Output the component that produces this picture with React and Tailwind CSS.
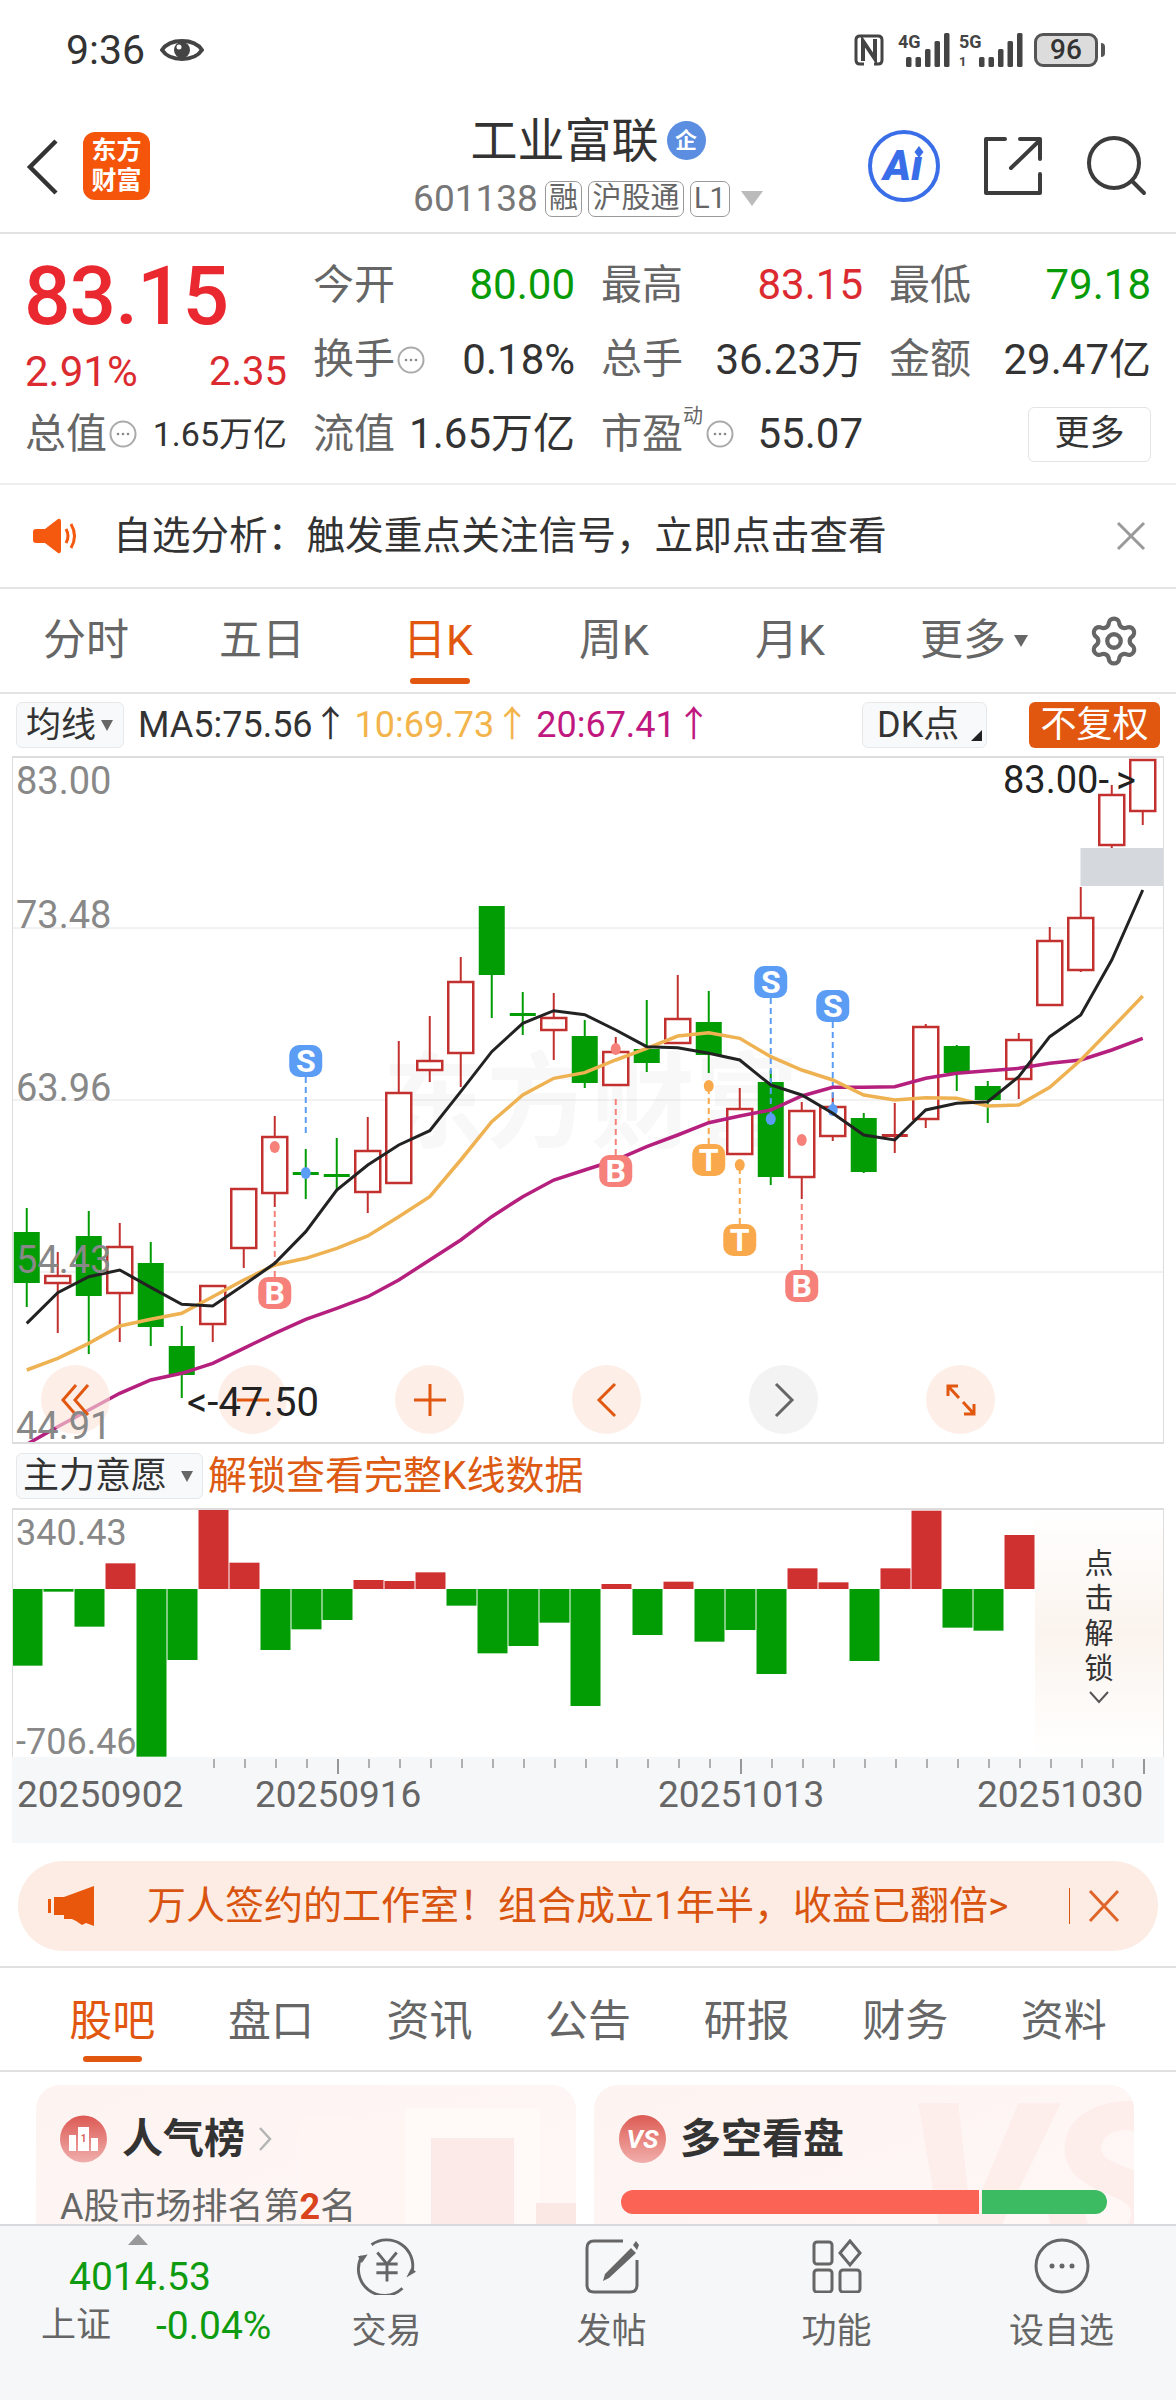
import { Settings } from "lucide-react"

const candles = [
  ["g", 1232, 1283, 1208, 1307], ["r", 1276, 1283, 1252, 1333], ["g", 1236, 1296, 1211, 1354],
  ["r", 1247, 1293, 1223, 1342], ["g", 1263, 1327, 1242, 1346], ["g", 1346, 1375, 1326, 1398],
  ["r", 1286, 1324, 1286, 1342], ["r", 1189, 1248, 1189, 1268], ["r", 1137, 1193, 1116, 1207],
  ["g", 1172, 1174, 1149, 1199], ["g", 1174, 1176, 1138, 1190], ["r", 1151, 1192, 1117, 1213],
  ["r", 1093, 1183, 1041, 1183], ["r", 1061, 1070, 1016, 1082], ["r", 982, 1053, 957, 1087],
  ["g", 906, 975, 906, 1018], ["g", 1013, 1016, 992, 1035], ["r", 1018, 1030, 993, 1060],
  ["g", 1036, 1083, 1020, 1088], ["r", 1052, 1085, 1037, 1085], ["g", 1049, 1063, 1000, 1072],
  ["r", 1019, 1043, 975, 1043], ["g", 1022, 1055, 991, 1073], ["r", 1109, 1154, 1088, 1154],
  ["g", 1082, 1177, 1070, 1185], ["r", 1111, 1177, 1102, 1199], ["r", 1107, 1136, 1093, 1141],
  ["g", 1118, 1172, 1113, 1173], ["f", 1134, 1137, 1103, 1153], ["r", 1027, 1119, 1024, 1128],
  ["g", 1046, 1073, 1045, 1091], ["g", 1086, 1100, 1081, 1123], ["r", 1040, 1079, 1033, 1099],
  ["r", 941, 1005, 927, 1005], ["r", 918, 970, 887, 972], ["r", 795, 845, 785, 848],
  ["r", 760, 811, 760, 825],
]

const ma5 = [970, 878, 830, 810, 862, 913, 918, 855, 790, 695, 570, 495, 435, 392, 275, 155, 70, 32, 44, 90, 140, 143, 160, 180, 255, 285, 340, 405, 420, 330, 310, 305, 230, 110, 45, -120, -330]
const ma10 = [1110, 1075, 1030, 978, 958, 940, 890, 840, 795, 775, 745, 708, 650, 590, 480, 365, 285, 235, 218, 180, 145, 108, 98, 115, 170, 210, 240, 285, 300, 293, 295, 318, 315, 262, 180, 85, -12]
const ma20 = [1333, 1280, 1230, 1180, 1140, 1120, 1090, 1045, 1000, 958, 925, 890, 840, 780, 720, 650, 590, 540, 510, 480, 440, 405, 368, 348, 330, 288, 262, 262, 260, 235, 220, 212, 205, 190, 180, 150, 115]

const signals = [
  { l: "S", i: 9, top: 1045, dashTo: 1136, dot: 1173, c: "#5b9df5" },
  { l: "S", i: 24, top: 966, dashTo: 1119, dot: 1119, c: "#5b9df5" },
  { l: "S", i: 26, top: 990, dashTo: 1110, dot: 1110, c: "#5b9df5" },
  { l: "B", i: 8, top: 1277, dashTo: 1207, dot: 1147, c: "#f5817a" },
  { l: "B", i: 19, top: 1155, dashTo: 1097, dot: 1049, c: "#f5817a" },
  { l: "B", i: 25, top: 1270, dashTo: 1202, dot: 1140, c: "#f5817a" },
  { l: "T", i: 22, top: 1144, dashTo: 1092, dot: 1086, c: "#f9a94b" },
  { l: "T", i: 23, top: 1224, dashTo: 1170, dot: 1165, c: "#f9a94b" },
]

const bars = [677, 455, 560, 370, 950, 660, 205, 368, 630, 568, 540, 420, 423, 397, 497, 640, 618, 548, 798, 432, 585, 425, 605, 570, 702, 385, 427, 663, 385, 212, 563, 572, 285]

const xAt = (i) => 26.25 + i * 31
const linePoints = (arr) => arr.map((v, i) => `${xAt(i)},${1000 + v / 3}`).join(" ")

const CandleChart = () => (
  <svg viewBox="13 758 1149 684" className="absolute inset-0 w-full h-full">
    <text x="590" y="1140" textAnchor="middle" fontSize="104" fontWeight="700" fill="#f8f8f8">东方财富</text>
    {[928, 1100, 1272].map(y => (
      <line key={y} x1="12" x2="1163" y1={y} y2={y} stroke="#c8c8c8" strokeWidth="1" strokeDasharray="1 1" />
    ))}
    <rect x="1080" y="848" width="83" height="38" fill="#d5d8dc" />
    {candles.map(([k, top, bot, wt, wb], i) => {
      const x = xAt(i)
      const color = k === "g" ? "#029c05" : "#c2302f"
      return (
        <g key={i}>
          <line x1={x} x2={x} y1={wt} y2={wb} stroke={color} strokeWidth="2" />
          {k === "r"
            ? <rect x={x - 12.5} y={top} width="25" height={bot - top} fill="#fff" stroke={color} strokeWidth="2.5" />
            : <rect x={x - 13} y={top} width="26" height={Math.max(bot - top, 3)} fill={color} />}
        </g>
      )
    })}
    {signals.map(s => {
      const x = xAt(s.i)
      const isBlue = s.l === "S"
      return (
        <g key={s.l + s.i}>
          <line x1={x} x2={x} y1={isBlue ? s.top + 32 : s.top} y2={s.dashTo} stroke={s.c} strokeWidth="2" strokeDasharray="6 4" />
          <ellipse cx={x} cy={s.dot} rx="5" ry="6" fill={s.c} />
        </g>
      )
    })}
    <polyline points={linePoints(ma20)} fill="none" stroke="#b51f7d" strokeWidth="3.5" />
    <polyline points={linePoints(ma10)} fill="none" stroke="#efb253" strokeWidth="3.5" />
    <polyline points={linePoints(ma5)} fill="none" stroke="#222" strokeWidth="3" />
    {signals.map(s => {
      const x = xAt(s.i)
      return (
        <g key={"b" + s.l + s.i}>
          <rect x={x - 16.5} y={s.top} width="33" height="32" rx="10" fill={s.c} />
          <text x={x} y={s.top + 27} textAnchor="middle" fontSize="32" fontWeight="700" fill="#fff">{s.l}</text>
        </g>
      )
    })}
  </svg>
)

const FundBars = () => (
  <svg viewBox="13 1510 1149 247" className="absolute inset-0 w-full h-full">
    {bars.map((z, i) => {
      const y = 1440 + z / 3
      const green = y > 1589
      return (
        <rect
          key={i}
          x={12 + i * 31}
          y={green ? 1589 : y}
          width="30"
          height={Math.abs(y - 1589)}
          fill={green ? "#029c05" : "#cf3030"}
        />
      )
    })}
  </svg>
)

const Ticks = () => (
  <svg viewBox="12 1757 1152 20" className="block w-full h-[20px]">
    {Array.from({ length: 31 }).map((_, k) => {
      const big = k === 4 || k === 17 || k === 30
      const x = 214 + k * 31
      return <line key={k} x1={x} x2={x} y1="1759" y2={big ? 1774 : 1768} stroke={big ? "#777" : "#999"} strokeWidth="1.5" />
    })}
  </svg>
)

const Dots = () => (
  <svg width="28" height="28" viewBox="0 0 28 28" className="shrink-0">
    <circle cx="14" cy="14" r="12.5" fill="none" stroke="#aaa" strokeWidth="2" />
    <circle cx="9" cy="14" r="1.3" fill="#888" />
    <circle cx="14" cy="14" r="1.3" fill="#888" />
    <circle cx="19" cy="14" r="1.3" fill="#888" />
  </svg>
)

const Signal = ({ label, extra }) => (
  <svg width={extra ? 62 : 52} height="34" viewBox={`0 0 ${extra ? 62 : 52} 34`} className="overflow-visible">
    <text x="0" y="15" fontSize="18" fontWeight="700" fill="#444">{label}</text>
    {extra && <text x="0" y="33" fontSize="13" fontWeight="700" fill="#444">{extra}</text>}
    {Array.from({ length: 5 }).map((_, i) => {
      const x = (extra ? 20 : 8) + i * 9.5
      const h = i < 2 ? 10 : 10 + (i - 1) * 8
      return <rect key={i} x={x} y={34 - h} width="5.5" height={h} rx="1.5" fill="#444" />
    })}
  </svg>
)

const StatusBar = () => (
  <div className="h-[100px] flex items-center pl-[66px] pr-[71px]">
    <span className="text-[41px] leading-none text-[#333]">9:36</span>
    <svg width="44" height="32" viewBox="0 0 44 32" className="ml-[15px]">
      <path d="M2 16 C10 4 34 4 42 16 C34 28 10 28 2 16 Z" fill="none" stroke="#444" strokeWidth="4" />
      <circle cx="22" cy="16" r="8" fill="#444" />
      <circle cx="19" cy="13" r="2.5" fill="#fff" />
    </svg>
    <div className="ml-auto flex items-center">
      <svg width="30" height="32" viewBox="0 0 30 32">
        <path d="M6 2 H24 Q28 2 28 6 V26 Q28 30 24 30 H20 M10 30 H6 Q2 30 2 26 V6 Q2 2 6 2" fill="none" stroke="#444" strokeWidth="3" />
        <path d="M9 27 V7 L21 25 V5" fill="none" stroke="#444" strokeWidth="4" />
      </svg>
      <div className="ml-[14px]"><Signal label="4G" /></div>
      <div className="ml-[9px]"><Signal label="5G" extra="1" /></div>
      <div className="ml-[13px] w-[64px] h-[34px] rounded-[9px] border-[3px] border-[#555] bg-[#dcdcdc] flex items-center justify-center text-[28px] font-medium text-[#333]">96</div>
      <div className="ml-[3px] w-[4px] h-[14px] rounded-r bg-[#555]"></div>
    </div>
  </div>
)

const Chip = ({ children, w }) => (
  <span className={`${w} h-[36px] rounded-[7px] border border-[#999] flex items-center justify-center text-[29px] leading-none text-[#666]`}>
    {children}
  </span>
)

const Header = () => (
  <div className="h-[134px] border-b-2 border-[#e2e2e2] flex">
    <div className="w-[388px] flex items-start">
      <svg width="34" height="58" viewBox="0 0 34 58" className="ml-[26px] mt-[38px]">
        <polyline points="30,3 4,29 30,55" fill="none" stroke="#333" strokeWidth="4.5" />
      </svg>
      <div className="ml-[23px] mt-[32px] w-[67px] h-[68px] rounded-[12px] bg-[#f4550b] text-white font-bold text-[25px] leading-[30px] flex flex-col items-center justify-center">
        <span>东方</span>
        <span>财富</span>
      </div>
    </div>
    <div className="w-[400px] flex flex-col items-center">
      <div className="mt-[14px] h-[52px] flex items-center text-[#333]">
        <span className="text-[47px] leading-none">工业富联</span>
        <span className="ml-[8px] w-[39px] h-[39px] rounded-full bg-[#5b8de0] text-white text-[22px] font-bold flex items-center justify-center">企</span>
      </div>
      <div className="mt-[14px] flex items-center text-[#777]">
        <span className="text-[37px] leading-none">601138</span>
        <div className="ml-[7px] flex items-center gap-[6px]">
          <Chip w="w-[37px]">融</Chip>
          <Chip w="w-[96px]">沪股通</Chip>
          <Chip w="w-[40px]">L1</Chip>
        </div>
        <span className="ml-[11px] w-0 h-0 border-x-[11px] border-x-transparent border-t-[15px] border-t-[#bbb]"></span>
      </div>
    </div>
    <div className="flex-1 flex items-start">
      <svg width="74" height="74" viewBox="0 0 74 74" className="ml-[79px] mt-[29px]">
        <circle cx="37" cy="37" r="34" fill="none" stroke="#3a6ee8" strokeWidth="4" />
        <text x="36" y="51" textAnchor="middle" fontSize="42" fontWeight="900" fontStyle="italic" fill="#3a6ee8">{"A\u0131"}</text>
        <path d="M52 17 L56.5 23 L52 29 L47.5 23 Z" fill="#3a6ee8" />
      </svg>
      <svg width="60" height="60" viewBox="0 0 60 60" className="ml-[42px] mt-[36px]">
        <path d="M22 3 H3 V57 H57 V38" fill="none" stroke="#3c3c3c" strokeWidth="4" strokeLinecap="round" strokeLinejoin="round" />
        <path d="M28 32 L57 4 M37 3 H57 V23" fill="none" stroke="#3c3c3c" strokeWidth="4" strokeLinecap="round" strokeLinejoin="round" />
      </svg>
      <svg width="62" height="62" viewBox="0 0 62 62" className="ml-[43px] mt-[35px]">
        <circle cx="28" cy="28" r="25" fill="none" stroke="#3c3c3c" strokeWidth="4" />
        <line x1="46" y1="46" x2="58" y2="58" stroke="#3c3c3c" strokeWidth="4" strokeLinecap="round" />
      </svg>
    </div>
  </div>
)

const Stat = ({ label, value, color = "text-[#333]", dots }) => (
  <div className="flex items-center justify-between text-[41px] leading-none">
    <span className="flex items-center text-[#666] gap-[2px]">
      {label}
      {dots && <Dots />}
    </span>
    <span className={`${color} text-[42px]`}>{value}</span>
  </div>
)

const Quote = () => (
  <div className="h-[251px] border-b-2 border-[#eeeeee] flex pl-[25px]">
    <div className="w-[262px] pt-[20px] flex flex-col text-[#dc2b30]">
      <div className="h-[84px] -ml-[1px] flex items-center text-[82px] leading-none font-medium text-[#ea2830] tracking-[-1px]">83.15</div>
      <div className="h-[68px] flex items-center justify-between leading-none">
        <span className="text-[42px]">2.91%</span>
        <span className="text-[40px]">2.35</span>
      </div>
      <div className="h-[56px] flex items-center justify-between leading-none">
        <span className="flex items-center text-[41px] text-[#666] gap-[2px]">总值<Dots /></span>
        <span className="text-[34px] text-[#333]">1.65万亿</span>
      </div>
    </div>
    <div className="w-[838px] ml-[26px] pt-[14px] grid grid-cols-3 gap-x-[26px] auto-rows-[74.5px] items-center">
      <Stat label="今开" value="80.00" color="text-[#079b07]" />
      <Stat label="最高" value="83.15" color="text-[#dc2b30]" />
      <Stat label="最低" value="79.18" color="text-[#079b07]" />
      <Stat label="换手" value="0.18%" dots />
      <Stat label="总手" value="36.23万" />
      <Stat label="金额" value="29.47亿" />
      <Stat label="流值" value="1.65万亿" />
      <div className="flex items-center justify-between text-[41px] leading-none">
        <span className="flex items-center text-[#666]">
          市盈
          <span className="text-[20px] self-start -mt-[8px]">动</span>
          <span className="ml-[3px]"><Dots /></span>
        </span>
        <span className="text-[#333] text-[42px]">55.07</span>
      </div>
      <div className="flex justify-end">
        <span className="w-[123px] h-[55px] rounded-[6px] border border-[#e4e4e4] text-[#333] text-[35px] flex items-center justify-center">更多</span>
      </div>
    </div>
  </div>
)

const Notice = () => (
  <div className="h-[104px] border-b-2 border-[#e4e4e4] flex items-center pl-[33px] pr-[30px]">
    <svg width="46" height="40" viewBox="0 0 46 40">
      <path d="M3 13 H12 L25 3 Q28 2 28 6 V34 Q28 38 25 37 L12 27 H3 Q0 27 0 24 V16 Q0 13 3 13 Z" fill="#f4590f" />
      <path d="M33 13 Q37 20 33 27" fill="none" stroke="#f4590f" strokeWidth="3" />
      <path d="M38 8 Q45 20 38 32" fill="none" stroke="#f4590f" strokeWidth="3" />
    </svg>
    <span className="ml-[34px] text-[38.7px] leading-none text-[#333] whitespace-nowrap">{"自选分析\uFF1A触发重点关注信号\uFF0C立即点击查看"}</span>
    <svg width="30" height="30" viewBox="0 0 30 30" className="ml-auto">
      <path d="M2 2 L28 28 M28 2 L2 28" stroke="#999" strokeWidth="3" />
    </svg>
  </div>
)

const periodTabs = ["分时", "五日", "日K", "周K", "月K"]

const ChartTabs = () => (
  <div className="h-[105px] border-b-2 border-[#e4e4e4] flex items-center -ml-[2px] text-[43px] leading-none text-[#666]">
    {periodTabs.map((t, i) => (
      <div key={t} className={`relative w-[176px] h-full flex items-center justify-center ${i === 2 ? "text-[#e2570f]" : ""}`}>
        {t}
        {i === 2 && <span className="absolute bottom-[8px] left-[60px] w-[60px] h-[6px] rounded-full bg-[#e2570f]"></span>}
      </div>
    ))}
    <div className="w-[176px] h-full flex items-center justify-center pl-[16px]">
      更多
      <span className="ml-[8px] w-0 h-0 border-x-[7px] border-x-transparent border-t-[12px] border-t-[#666]"></span>
    </div>
    <Settings size={54} strokeWidth={1.9} className="ml-[33px] text-[#666]" />
  </div>
)

const IndicatorRow = () => (
  <div className="h-[62px] flex items-center pl-[16px] pr-[16px] text-[36px] leading-none whitespace-nowrap">
    <div className="w-[108px] h-[46px] rounded-[6px] border border-[#e6e8ea] bg-[#f8f9fa] flex items-center pl-[9px] text-[35px] text-[#333]">
      均线
      <span className="ml-[5px] w-0 h-0 border-x-[6px] border-x-transparent border-t-[11px] border-t-[#666]"></span>
    </div>
    <span className="ml-[14px] text-[#333]">MA5:75.56↑</span>
    <span className="ml-[6px] text-[#f3b44c]">10:69.73↑</span>
    <span className="ml-[6px] text-[#c0187f]">20:67.41↑</span>
    <div className="relative ml-auto w-[125px] h-[46px] rounded-[6px] border border-[#e6e8ea] bg-[#f8f9fa] flex items-center pl-[14px] text-[36px] text-[#333]">
      DK点
      <span className="absolute right-[4px] bottom-[6px] w-0 h-0 border-l-[11px] border-l-transparent border-b-[11px] border-b-[#222]"></span>
    </div>
    <div className="ml-[42px] w-[131px] h-[46px] rounded-[6px] bg-[#e2570f] text-white flex items-center justify-center text-[36px]">不复权</div>
  </div>
)

const AxisLabel = ({ top, size = "text-[38px]", children }) => (
  <span className={`absolute left-[3px] ${size} leading-[30px] text-[#888]`} style={{ top }}>{children}</span>
)

const circleBtn = "w-[69px] h-[69px] rounded-full flex items-center justify-center"

const ZoomButtons = () => (
  <div className="absolute top-[607px] left-[28px] flex gap-[108px]">
    <div className={`${circleBtn} bg-[#fbe3d8]/60`}>
      <svg width="36" height="36" viewBox="0 0 36 36">
        <path d="M18 3 L5 18 L18 33 M30 3 L17 18 L30 33" fill="none" stroke="#e2570f" strokeWidth="3" />
      </svg>
    </div>
    <div className={`${circleBtn} bg-[#fbe3d8]/60`}>
      <svg width="36" height="36" viewBox="0 0 36 36">
        <path d="M2 18 H34" stroke="#e2570f" strokeWidth="3" />
      </svg>
    </div>
    <div className={`${circleBtn} bg-[#fbe3d8]/60`}>
      <svg width="36" height="36" viewBox="0 0 36 36">
        <path d="M2 18 H34 M18 2 V34" stroke="#e2570f" strokeWidth="3" />
      </svg>
    </div>
    <div className={`${circleBtn} bg-[#fbe3d8]/60`}>
      <svg width="36" height="36" viewBox="0 0 36 36">
        <path d="M26 2 L10 18 L26 34" fill="none" stroke="#e2570f" strokeWidth="3" />
      </svg>
    </div>
    <div className={`${circleBtn} bg-[#f3f3f3]`}>
      <svg width="36" height="36" viewBox="0 0 36 36">
        <path d="M10 2 L26 18 L10 34" fill="none" stroke="#666" strokeWidth="3" />
      </svg>
    </div>
    <div className={`${circleBtn} bg-[#fbe3d8]/60`}>
      <svg width="36" height="36" viewBox="0 0 36 36">
        <path d="M5 14 V4 H15 M5 4 L16 16 M31 22 V32 H21 M31 32 L20 20" fill="none" stroke="#e2570f" strokeWidth="3" />
      </svg>
    </div>
  </div>
)

const KChart = () => (
  <div className="relative mx-[12px] h-[688px] border-t-2 border-b-2 border-x border-[#dddddd] overflow-hidden">
    <CandleChart />
    <ZoomButtons />
    <AxisLabel top={8}>83.00</AxisLabel>
    <AxisLabel top={142}>73.48</AxisLabel>
    <AxisLabel top={315}>63.96</AxisLabel>
    <AxisLabel top={487}>54.43</AxisLabel>
    <AxisLabel top={653}>44.91</AxisLabel>
    <span className="absolute left-[990px] top-[2px] text-[38px] leading-[40px] text-[#222]">83.00-<span className="ml-[7px]">&gt;</span></span>
    <span className="absolute left-[174px] top-[625px] text-[40px] leading-[40px] text-[#222]">&lt;-47.50</span>
  </div>
)

const FundRow = () => (
  <div className="h-[64px] flex items-center pl-[16px] whitespace-nowrap">
    <div className="w-[187px] h-[46px] rounded-[6px] border border-[#e6e8ea] bg-[#f8f9fa] flex items-center pl-[6px] text-[36px] leading-none text-[#333]">
      主力意愿
      <span className="ml-[14px] w-0 h-0 border-x-[6px] border-x-transparent border-t-[11px] border-t-[#666]"></span>
    </div>
    <span className="ml-[5px] text-[39px] leading-none text-[#dd5a12]">解锁查看完整K线数据</span>
  </div>
)

const FundChart = () => (
  <div className="relative mx-[12px] h-[249px] border-t-2 border-x border-[#dddddd] overflow-hidden">
    <FundBars />
    <AxisLabel top={8} size="text-[36px]">340.43</AxisLabel>
    <AxisLabel top={217} size="text-[36px]">-706.46</AxisLabel>
    <div className="absolute right-0 top-0 w-[128px] h-full bg-gradient-to-b from-white via-[#fbf4ee] to-white flex flex-col items-center pt-[40px] gap-[6px] text-[29px] leading-[29px] text-[#333]">
      <span>点</span>
      <span>击</span>
      <span>解</span>
      <span>锁</span>
      <svg width="22" height="14" viewBox="0 0 22 14">
        <path d="M2 2 L11 12 L20 2" fill="none" stroke="#555" strokeWidth="2" />
      </svg>
    </div>
  </div>
)

const DateAxis = () => (
  <div className="mx-[12px] h-[86px] bg-[#f6f7f9]">
    <Ticks />
    <div className="flex text-[37px] leading-[36px] text-[#666] whitespace-nowrap">
      <span className="ml-[5px] w-[167px]">20250902</span>
      <span className="ml-[71px] w-[167px]">20250916</span>
      <span className="ml-[236px] w-[167px]">20251013</span>
      <span className="ml-[152px] w-[167px]">20251030</span>
    </div>
  </div>
)

const Banner = () => (
  <div className="h-[125px] border-b-2 border-[#e0e0e0] pt-[18px] px-[18px]">
    <div className="h-[90px] rounded-full bg-[#fcece3] flex items-center pl-[30px] text-[#d9540f] whitespace-nowrap">
      <svg width="46" height="40" viewBox="0 0 46 40">
        <path d="M0 13 H3 V27 H0 Z M6 11 H16 L46 0 V40 L38 37 L34 39 L28 35 L24 33 H16 V29 H6 Z" fill="#e8570c" />
      </svg>
      <span className="ml-[53px] w-[862px] text-[39px] leading-none">{"万人签约的工作室\uFF01组合成立1年半\uFF0C收益已翻倍>"}</span>
      <span className="ml-[60px] w-px h-[36px] bg-[#d9540f]"></span>
      <svg width="32" height="34" viewBox="0 0 32 34" className="ml-[18px]">
        <path d="M2 2 L30 32 M30 2 L2 32" stroke="#e0652a" strokeWidth="3" />
      </svg>
    </div>
  </div>
)

const infoTabs = ["股吧", "盘口", "资讯", "公告", "研报", "财务", "资料"]

const InfoTabs = () => (
  <div className="h-[104px] border-b-2 border-[#e0e0e0] flex pl-[33px] text-[43px] leading-none text-[#666]">
    {infoTabs.map((t, i) => (
      <div key={t} className={`relative w-[158.6px] flex items-center justify-center pt-[4px] ${i === 0 ? "text-[#e2570f]" : ""}`}>
        {t}
        {i === 0 && <span className="absolute bottom-[8px] left-[50px] w-[59px] h-[6px] rounded-full bg-[#e2570f]"></span>}
      </div>
    ))}
  </div>
)

const Cards = () => (
  <div className="h-[152px] overflow-hidden flex pl-[36px] pt-[13px] gap-[18px]">
    <div className="relative w-[540px] h-[200px] rounded-[24px] bg-gradient-to-br from-[#fdf4f2] to-[#fff8f6] overflow-hidden">
      <div className="absolute left-[264px] top-[32px] w-[105px] h-[200px] bg-[#fff6f3]"></div>
      <div className="absolute left-[369px] top-[23px] w-[135px] h-[200px] bg-[#fff9f7]"></div>
      <div className="absolute left-[395px] top-[53px] w-[83px] h-[200px] bg-[#fbeae7]"></div>
      <div className="absolute left-[500px] top-[118px] w-[40px] h-[60px] bg-[#fbe7e4]"></div>
      <div className="relative flex items-center pl-[24px] pt-[30px]">
        <svg width="47" height="48" viewBox="0 0 47 48">
          <defs>
            <linearGradient id="hot" x1="0" y1="0" x2="0" y2="1">
              <stop offset="0" stopColor="#dc5a54" />
              <stop offset="1" stopColor="#f0aeac" />
            </linearGradient>
          </defs>
          <circle cx="23.5" cy="24" r="23.5" fill="url(#hot)" />
          <rect x="9" y="20" width="7" height="16" fill="#fff" />
          <rect x="18" y="12" width="11" height="24" fill="#fff" />
          <rect x="31" y="23" width="7" height="13" fill="#fff" />
          <text x="23.5" y="27" textAnchor="middle" fontSize="10" fontWeight="700" fill="#d9605a">1</text>
        </svg>
        <span className="ml-[15px] text-[41px] leading-none font-bold text-[#333]">人气榜</span>
        <svg width="14" height="26" viewBox="0 0 14 26" className="ml-[13px]">
          <path d="M2 2 L12 13 L2 24" fill="none" stroke="#b5b5b5" strokeWidth="2.5" />
        </svg>
      </div>
      <div className="relative mt-[26px] ml-[24px] text-[36px] leading-none text-[#666]">
        A股市场排名第<span className="font-bold text-[#d9431e]">2</span>名
      </div>
    </div>
    <div className="relative w-[540px] h-[200px] rounded-[24px] bg-gradient-to-br from-[#fdf4f2] to-[#fff8f6] overflow-hidden">
      <span className="absolute left-[310px] top-[0px] text-[220px] leading-[200px] font-black italic text-[#fdeeeb]">VS</span>
      <div className="relative flex items-center pl-[25px] pt-[30px]">
        <span className="w-[47px] h-[48px] rounded-full bg-gradient-to-b from-[#dc5a54] to-[#f0aeac] flex items-center justify-center text-[26px] font-bold italic text-white">VS</span>
        <span className="ml-[14px] text-[41px] leading-none font-bold text-[#333]">多空看盘</span>
      </div>
      <div className="relative mt-[27px] ml-[27px] w-[486px] h-[24px] rounded-full overflow-hidden flex gap-[3px]">
        <span className="w-[358px] bg-[#fb6355]"></span>
        <span className="flex-1 bg-[#3dbb63]"></span>
      </div>
    </div>
  </div>
)

const Tool = ({ label, children }) => (
  <div className="w-[225px] flex flex-col items-center pt-[12px]">
    <div className="h-[56px] flex items-center justify-center">{children}</div>
    <span className="mt-[14px] text-[35px] leading-[48px] text-[#666]">{label}</span>
  </div>
)

const BottomBar = () => (
  <div className="h-[176px] border-t-2 border-[#d8d9de] bg-[#f6f7f9] flex whitespace-nowrap">
    <div className="w-[274px] flex flex-col items-start pl-[41px]">
      <span className="mt-[8px] ml-[87px] w-0 h-0 border-x-[10px] border-x-transparent border-b-[11px] border-b-[#999]"></span>
      <span className="mt-[12px] ml-[28px] text-[39px] leading-[40px] text-[#0f9b0f]">4014.53</span>
      <div className="mt-[5px] flex items-center leading-[48px]">
        <span className="text-[35px] text-[#666]">上证</span>
        <span className="ml-[45px] text-[39px] text-[#0f9b0f]">-0.04%</span>
      </div>
    </div>
    <Tool label="交易">
      <svg width="62" height="58" viewBox="0 0 64 60">
        <path d="M16 8 A27 27 0 0 1 58 36" fill="none" stroke="#666" strokeWidth="3" />
        <path d="M48 53 A27 27 0 0 1 6 20" fill="none" stroke="#666" strokeWidth="3" />
        <path d="M62 36 L52 42 L57 32 Z M2 20 L12 18 L6 27 Z" fill="#666" />
        <path d="M22 16 L32 28 L42 16 M32 28 V46 M21 28 H43 M21 37 H43" fill="none" stroke="#666" strokeWidth="3" />
      </svg>
    </Tool>
    <Tool label="发帖">
      <svg width="54" height="56" viewBox="0 0 54 56">
        <path d="M38 3 H9 Q2 3 2 10 V47 Q2 54 9 54 H45 Q52 54 52 47 V22" fill="none" stroke="#666" strokeWidth="3" />
        <path d="M20 36 L46 10 L51 15 L24 40 L18 43 Z M48 7 L51 3 L54 7 L52 12 Z" fill="#666" />
      </svg>
    </Tool>
    <Tool label="功能">
      <svg width="50" height="54" viewBox="0 0 50 54">
        <rect x="2" y="3" width="18" height="22" rx="3" fill="none" stroke="#666" strokeWidth="3" />
        <path d="M38 2 L48 14 L38 26 L28 14 Z" fill="none" stroke="#666" strokeWidth="3" />
        <rect x="2" y="31" width="18" height="22" rx="3" fill="none" stroke="#666" strokeWidth="3" />
        <rect x="28" y="31" width="20" height="22" rx="3" fill="none" stroke="#666" strokeWidth="3" />
      </svg>
    </Tool>
    <Tool label="设自选">
      <svg width="56" height="56" viewBox="0 0 56 56">
        <circle cx="28" cy="28" r="26" fill="none" stroke="#666" strokeWidth="3" />
        <circle cx="18" cy="28" r="2.5" fill="#666" />
        <circle cx="28" cy="28" r="2.5" fill="#666" />
        <circle cx="38" cy="28" r="2.5" fill="#666" />
      </svg>
    </Tool>
  </div>
)

const App = () => {
  return (
    <div className="w-[1176px] h-[2400px] overflow-hidden bg-white font-[Roboto,'Noto_Sans_CJK_SC',sans-serif]">
      <StatusBar />
      <Header />
      <Quote />
      <Notice />
      <ChartTabs />
      <IndicatorRow />
      <KChart />
      <FundRow />
      <FundChart />
      <DateAxis />
      <Banner />
      <InfoTabs />
      <Cards />
      <BottomBar />
    </div>
  )
}

export default App
